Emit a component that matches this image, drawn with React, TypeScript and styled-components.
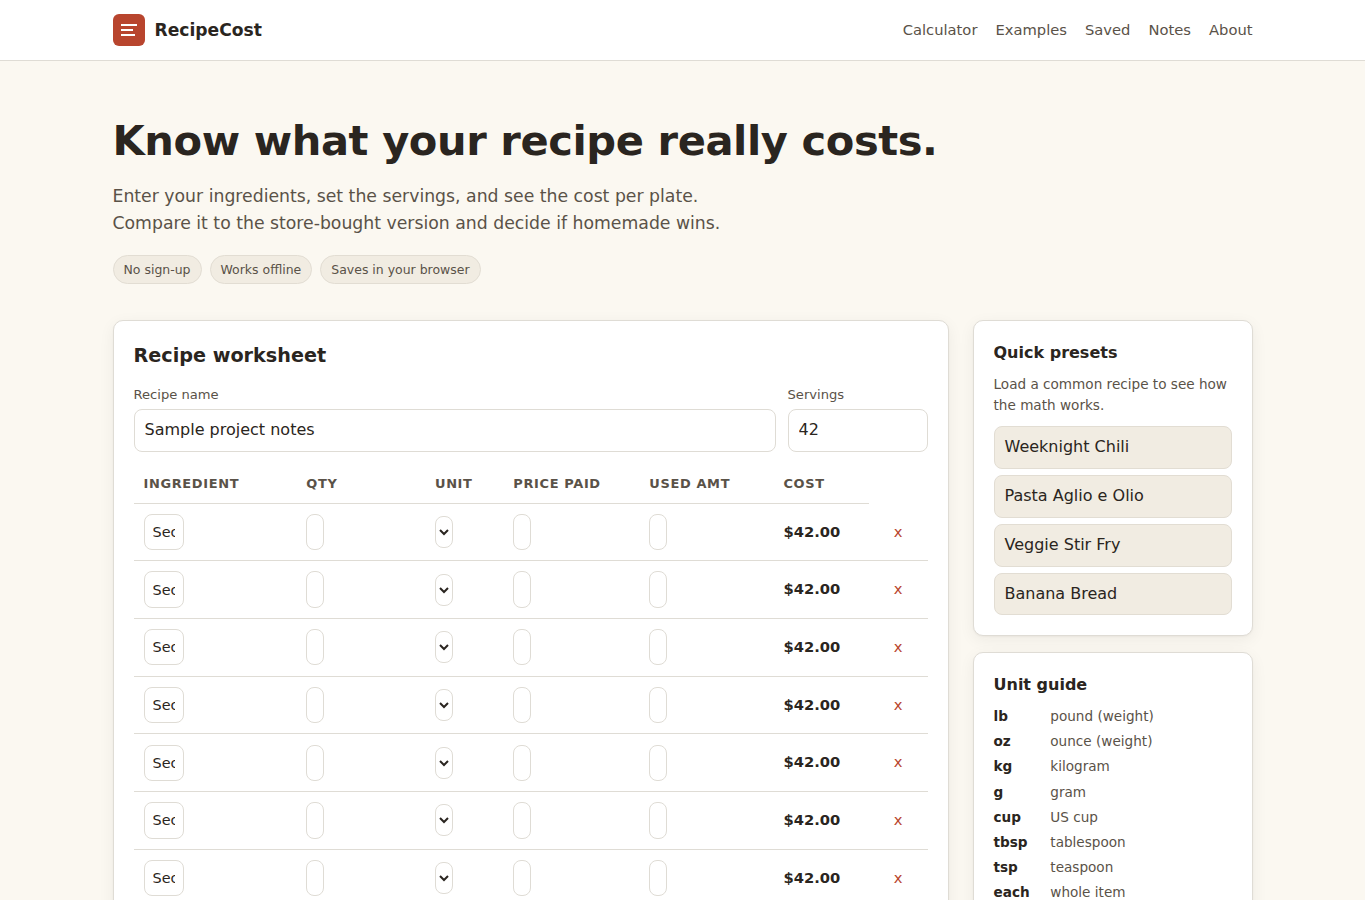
import React from "react";
import styled, { createGlobalStyle } from "styled-components";

const Global = createGlobalStyle`
  *, *::before, *::after { box-sizing: border-box; }
  html { height: 100%; overflow: hidden; }
  body {
    margin: 0;
    height: 100%;
    overflow: hidden;
    background: #fbf8f1;
    color: #2a2520;
    font-family: "DejaVu Sans", sans-serif;
    font-size: 16px;
    line-height: 1.6;
  }
  h1, h2, h3, p { margin: 0; }
`;

const Header = styled.header`
  height: 61px;
  background: #fff;
  border-bottom: 1px solid #dfdcd5;
`;

const Container = styled.div`
  width: 1140px;
  margin: 0 auto;
`;

const HeaderRow = styled(Container)`
  height: 60px;
  display: flex;
  align-items: center;
  justify-content: space-between;
`;

const Brand = styled.div`
  display: flex;
  align-items: center;
  gap: 10px;
  font-size: 17.12px;
  font-weight: 700;
  line-height: 28px;
`;

const Nav = styled.nav`
  display: flex;
  gap: 18px;
`;

const NavLink = styled.a`
  color: #5a5248;
  font-size: 14.72px;
`;

const Hero = styled.section`
  padding: 51px 0 36px;
`;

const Title = styled.h1`
  font-size: 41.6px;
  line-height: 58px;
  font-weight: 700;
  letter-spacing: -0.416px;
`;

const Lead = styled.p`
  margin-top: 13px;
  font-size: 17.28px;
  line-height: 27px;
  color: #5a5248;
`;

const Chips = styled.div`
  display: flex;
  gap: 8px;
  margin-top: 18px;
`;

const Chip = styled.span`
  height: 29px;
  padding: 0 10px;
  border: 1px solid #e2ddd3;
  border-radius: 999px;
  background: #f1ece2;
  color: #5a5248;
  font-size: 12.48px;
  line-height: 27px;
`;

const Columns = styled.main`
  display: grid;
  grid-template-columns: 836px 280px;
  gap: 24px;
  align-items: start;
`;

const Card = styled.section`
  padding: 20px;
  background: #fff;
  border: 1px solid #dfdcd5;
  border-radius: 10px;
  box-shadow: 0 1px 2px rgba(42, 37, 32, 0.04), 0 4px 16px rgba(42, 37, 32, 0.06);
`;

const CardTitle = styled.h2`
  font-size: 19.2px;
  line-height: 30px;
`;

const SideTitle = styled.h3`
  font-size: 16px;
  line-height: 23px;
`;

const Fields = styled.div`
  display: grid;
  grid-template-columns: 1fr 140px;
  gap: 12px;
  margin-top: 13px;
`;

const Field = styled.label`
  display: flex;
  flex-direction: column;
  gap: 4px;
  color: #5a5248;
  font-size: 13.12px;
  line-height: 21px;
`;

const TextInput = styled.input`
  width: 100%;
  height: 43px;
  padding: 0 10px 2px;
  border: 1px solid #dfdcd5;
  border-radius: 8px;
  background: #fff;
  color: #2a2520;
  font: 16px "DejaVu Sans", sans-serif;
`;

const Table = styled.table`
  width: 794px;
  margin-top: 12px;
  table-layout: fixed;
  border-collapse: separate;
  border-spacing: 0;
  font-size: 14.72px;
`;

const HeadCell = styled.th`
  height: 39.5px;
  padding: 1px 10px 0;
  border-bottom: 1px solid #dfdcd5;
  color: #5a5248;
  font-size: 12.96px;
  font-weight: 700;
  letter-spacing: 0.64px;
  line-height: 20px;
  text-align: left;
  text-transform: uppercase;
  white-space: nowrap;
`;

const Cell = styled.td<{ $text?: boolean; $strong?: boolean }>`
  height: 57.72px;
  padding: 0 10px ${(p) => (p.$text ? 1.6 : 0)}px;
  border-bottom: 1px solid #dfdcd5;
  font-weight: ${(p) => (p.$strong ? 700 : 400)};
  line-height: 23px;
  vertical-align: middle;
`;

const CellInput = styled.input<{ $w: number }>`
  display: block;
  width: ${(p) => p.$w}px;
  height: 36.3px;
  padding: 0 8px;
  border: 1px solid #dfdcd5;
  border-radius: 8px;
  background: #fff;
  color: #2a2520;
  font: 14.4px "DejaVu Sans", sans-serif;
`;

const CellSelect = styled.select`
  display: block;
  width: 18px;
  height: 32px;
  padding: 6px 8px;
  border: 1px solid #dfdcd5;
  border-radius: 8px;
  background: #fff;
  color: #2a2520;
  font: 14.4px "DejaVu Sans", sans-serif;
`;

const RemoveButton = styled.button`
  display: block;
  padding: 0 15px;
  border: 0;
  background: none;
  color: #b8452e;
  font: 14.72px/23px "DejaVu Sans", sans-serif;
`;

const Sidebar = styled.aside`
  display: grid;
  gap: 16px;
`;

const Note = styled.p`
  margin-top: 10px;
  color: #5a5248;
  font-size: 13.6px;
  line-height: 21px;
`;

const Presets = styled.div`
  display: grid;
  gap: 6px;
  margin-top: 10px;
`;

const Preset = styled.button`
  height: 42.86px;
  padding: 0 10px 1.5px;
  border: 1px solid #e2ddd3;
  border-radius: 8px;
  background: #f1ece2;
  color: #2a2520;
  font: 16px "DejaVu Sans", sans-serif;
  text-align: left;
`;

const Units = styled.dl`
  display: grid;
  grid-template-columns: 56.8px 1fr;
  margin: 7.6px 0 0;
  font-size: 13.6px;
  line-height: 25.15px;
`;

const Unit = styled.dt`
  font-weight: 700;
`;

const UnitName = styled.dd`
  margin: 0;
  color: #5a5248;
`;

const widths = [162.8, 128.7, 78.3, 136, 134.2, 95.2, 58.8];
const heads = ["Ingredient", "Qty", "Unit", "Price paid", "Used amt", "Cost"];
const rows = [1, 2, 3, 4, 5, 6, 7];
const presets = ["Weeknight Chili", "Pasta Aglio e Olio", "Veggie Stir Fry", "Banana Bread"];
const units = [
  ["lb", "pound (weight)"],
  ["oz", "ounce (weight)"],
  ["kg", "kilogram"],
  ["g", "gram"],
  ["cup", "US cup"],
  ["tbsp", "tablespoon"],
  ["tsp", "teaspoon"],
  ["each", "whole item"],
];

const Logo = () => (
  <svg width="32" height="32" viewBox="0 0 32 32" aria-hidden="true">
    <rect width="32" height="32" rx="6" fill="#b8452e" />
    <path d="M8 11h16M8 16h12M8 21h14" stroke="#fff" strokeWidth="2" />
  </svg>
);

export default function App() {
  return (
    <>
      <Global />
      <Header>
        <HeaderRow>
          <Brand>
            <Logo />
            RecipeCost
          </Brand>
          <Nav>
            {["Calculator", "Examples", "Saved", "Notes", "About"].map((item) => (
              <NavLink key={item}>{item}</NavLink>
            ))}
          </Nav>
        </HeaderRow>
      </Header>
      <Container>
        <Hero>
          <Title>Know what your recipe really costs.</Title>
          <Lead>
            Enter your ingredients, set the servings, and see the cost per plate.
            <br />
            Compare it to the store-bought version and decide if homemade wins.
          </Lead>
          <Chips>
            <Chip>No sign-up</Chip>
            <Chip>Works offline</Chip>
            <Chip>Saves in your browser</Chip>
          </Chips>
        </Hero>
        <Columns>
          <Card>
            <CardTitle>Recipe worksheet</CardTitle>
            <Fields>
              <Field>
                Recipe name
                <TextInput defaultValue="Sample project notes" />
              </Field>
              <Field>
                Servings
                <TextInput defaultValue="42" />
              </Field>
            </Fields>
            <Table>
              <colgroup>
                {widths.map((w, i) => (
                  <col key={i} style={{ width: w }} />
                ))}
              </colgroup>
              <thead>
                <tr>
                  {heads.map((h) => (
                    <HeadCell key={h}>{h}</HeadCell>
                  ))}
                </tr>
              </thead>
              <tbody>
                {rows.map((r) => (
                  <tr key={r}>
                    <Cell><CellInput $w={40} defaultValue="Section" /></Cell>
                    <Cell><CellInput $w={18} /></Cell>
                    <Cell>
                      <CellSelect defaultValue="lb">
                        {units.map(([u]) => (
                          <option key={u}>{u}</option>
                        ))}
                      </CellSelect>
                    </Cell>
                    <Cell><CellInput $w={18} /></Cell>
                    <Cell><CellInput $w={18} /></Cell>
                    <Cell $text $strong>$42.00</Cell>
                    <Cell $text><RemoveButton>x</RemoveButton></Cell>
                  </tr>
                ))}
              </tbody>
            </Table>
          </Card>
          <Sidebar>
            <Card>
              <SideTitle>Quick presets</SideTitle>
              <Note>Load a common recipe to see how the math works.</Note>
              <Presets>
                {presets.map((p) => (
                  <Preset key={p}>{p}</Preset>
                ))}
              </Presets>
            </Card>
            <Card>
              <SideTitle>Unit guide</SideTitle>
              <Units>
                {units.map(([u, name]) => (
                  <React.Fragment key={u}>
                    <Unit>{u}</Unit>
                    <UnitName>{name}</UnitName>
                  </React.Fragment>
                ))}
              </Units>
            </Card>
          </Sidebar>
        </Columns>
      </Container>
    </>
  );
}
